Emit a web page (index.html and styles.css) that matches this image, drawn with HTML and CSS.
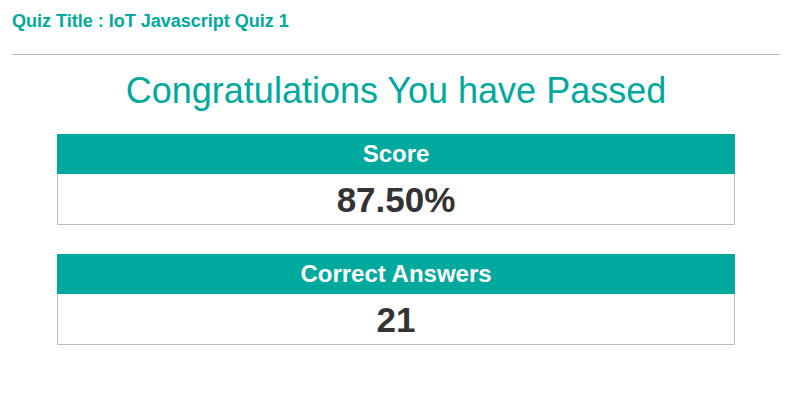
FILE: index.html
```html
<!DOCTYPE html>
<html>
<head>
<meta charset="utf-8">
<link rel="stylesheet" href="styles.css">
</head>
<body>
<div class="page">
  <div class="quiz-title">Quiz Title : IoT Javascript Quiz 1</div>
  <hr class="divider">
  <h1 class="result-heading">Congratulations You have Passed</h1>
  <div class="stat-box">
    <div class="stat-head">Score</div>
    <div class="stat-body">87.50%</div>
  </div>
  <div class="stat-box">
    <div class="stat-head">Correct Answers</div>
    <div class="stat-body">21</div>
  </div>
</div>
</body>
</html>
```
FILE: styles.css
```css
html, body {
  margin: 0;
  padding: 0;
  background: #ffffff;
  font-family: "Liberation Sans", Arial, sans-serif;
}
.page {
  padding: 11px 14px 0 12px;
}
.quiz-title {
  color: #00a99d;
  font-weight: bold;
  font-size: 18px;
  line-height: 20px;
}
.divider {
  border: 0;
  border-top: 1px solid #bbbbbb;
  margin: 23px 0 0 0;
  height: 0;
}
.result-heading {
  margin: 16px 0 23px 0;
  text-align: center;
  color: #00a99d;
  font-weight: normal;
  font-size: 36px;
  line-height: 40px;
}
.stat-box {
  margin: 0 45px 29px 45px;
  border: 1px solid #bbbbbb;
  border-top: 0;
  text-align: center;
}
.stat-head {
  background: #00a99d;
  color: #ffffff;
  font-weight: bold;
  font-size: 24px;
  height: 40px;
  line-height: 40px;
  margin: 0 -1px;
}
.stat-body {
  color: #333333;
  font-weight: bold;
  font-size: 35px;
  height: 50px;
  line-height: 52px;
}
```
